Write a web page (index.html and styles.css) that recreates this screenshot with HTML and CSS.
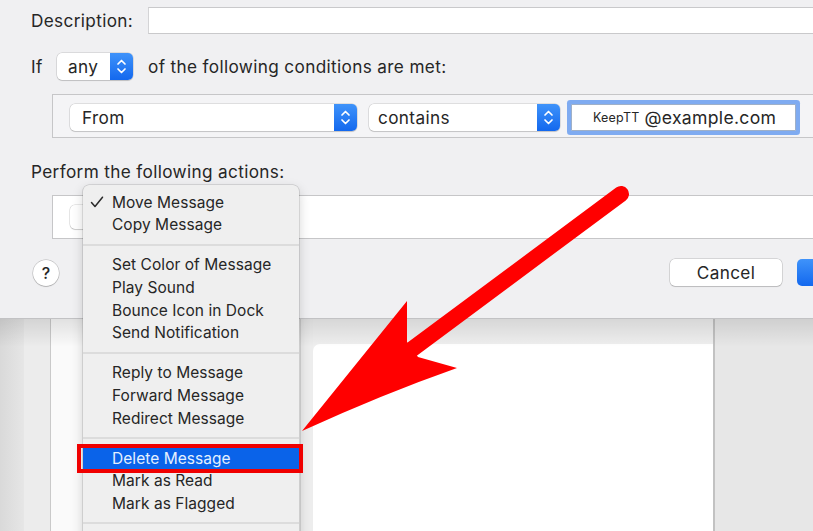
FILE: index.html
```html
<!DOCTYPE html>
<html>
<head>
<meta charset="utf-8">
<link rel="stylesheet" href="styles.css">
</head>
<body>
<div class="screen">
  <div class="dialog">
    <div class="row row-desc">
      <span class="label label-desc">Description:</span>
      <div class="field field-desc"></div>
    </div>
    <div class="row row-if">
      <span class="label label-if">If</span>
      <div class="popup popup-any">
        <span class="popup-text">any</span>
        <span class="stepper"><svg width="23" height="27" viewBox="0 0 23 27"><polyline points="8,11 11.5,7.5 15,11" fill="none" stroke="#fff" stroke-width="1.7" stroke-linecap="round" stroke-linejoin="round"/><polyline points="8,16 11.5,19.5 15,16" fill="none" stroke="#fff" stroke-width="1.7" stroke-linecap="round" stroke-linejoin="round"/></svg></span>
      </div>
      <span class="label label-cond">of the following conditions are met:</span>
    </div>
    <div class="box box-cond">
      <div class="popup popup-from">
        <span class="popup-text">From</span>
        <span class="stepper"><svg width="23" height="27" viewBox="0 0 23 27"><polyline points="8,11 11.5,7.5 15,11" fill="none" stroke="#fff" stroke-width="1.7" stroke-linecap="round" stroke-linejoin="round"/><polyline points="8,16 11.5,19.5 15,16" fill="none" stroke="#fff" stroke-width="1.7" stroke-linecap="round" stroke-linejoin="round"/></svg></span>
      </div>
      <div class="popup popup-contains">
        <span class="popup-text">contains</span>
        <span class="stepper"><svg width="23" height="27" viewBox="0 0 23 27"><polyline points="8,11 11.5,7.5 15,11" fill="none" stroke="#fff" stroke-width="1.7" stroke-linecap="round" stroke-linejoin="round"/><polyline points="8,16 11.5,19.5 15,16" fill="none" stroke="#fff" stroke-width="1.7" stroke-linecap="round" stroke-linejoin="round"/></svg></span>
      </div>
      <div class="field field-email">
        <span class="keep">KeepTT</span><span class="email">@example.com</span>
      </div>
    </div>
    <div class="row row-perform">
      <span class="label">Perform the following actions:</span>
    </div>
    <div class="box box-actions">
      <div class="popup popup-action"></div>
    </div>
    <div class="row row-buttons">
      <div class="help">?</div>
      <div class="spacer"></div>
      <div class="btn btn-cancel">Cancel</div>
      <div class="btn btn-ok"></div>
    </div>
  </div>
  <div class="backdrop">
    <div class="bd bd-a"></div>
    <div class="bd bd-b"></div>
    <div class="bd bd-c"></div>
    <div class="bd bd-d"></div>
    <div class="bd bd-e"><div class="card"></div></div>
    <div class="bd bd-f"></div>
  </div>

  <div class="menu">
    <div class="item checked"><svg class="check" width="14" height="12" viewBox="0 0 14 12"><polyline points="1.5,6.5 5,10.5 12.5,1.2" fill="none" stroke="#2a2a2a" stroke-width="1.5" stroke-linecap="round" stroke-linejoin="round"/></svg>Move Message</div>
    <div class="item">Copy Message</div>
    <div class="sep"></div>
    <div class="item">Set Color of Message</div>
    <div class="item">Play Sound</div>
    <div class="item">Bounce Icon in Dock</div>
    <div class="item">Send Notification</div>
    <div class="sep"></div>
    <div class="item">Reply to Message</div>
    <div class="item">Forward Message</div>
    <div class="item">Redirect Message</div>
    <div class="sep"></div>
    <div class="item selected">Delete Message</div>
    <div class="item">Mark as Read</div>
    <div class="item">Mark as Flagged</div>
    <div class="sep"></div>
  </div>

  <svg class="arrow" width="813" height="531" viewBox="0 0 813 531">
    <line x1="621" y1="194" x2="411" y2="350" stroke="#ff0000" stroke-width="16" stroke-linecap="round"/>
    <path d="M302,431 L407,301 L407,342 L418,357 L457,368 Q383,394 302,431 Z" fill="#ff0000"/>
  </svg>
</div>
</body>
</html>
```

FILE: styles.css
```css
* { box-sizing: border-box; }
html, body { margin: 0; padding: 0; }
body {
  font-family: Inter, "Liberation Sans", Arial, sans-serif;
  color: #262626;
  background: #efeff1;
}
.screen {
  position: relative;
  width: 813px;
  height: 531px;
  overflow: hidden;
  background: #efeff1;
}
.dialog {
  width: 890px;
  height: 319px;
  padding-left: 31px;
  padding-top: 7px;
  background: #f0f0f2;
  border-bottom: 1px solid #c2c2c4;
  display: flex;
  flex-direction: column;
}
.row {
  display: flex;
  align-items: center;
  height: 27px;
}
.label {
  font-size: 17.2px;
  letter-spacing: 0.35px;
  white-space: nowrap;
}
.label-desc { width: 117px; }
.field {
  background: #fff;
  height: 27px;
}
.field-desc {
  flex: 1;
  border-top: 1px solid #c9c9cb;
  border-bottom: 1px solid #c9c9cb;
  border-left: 1px solid #d4d4d6;
}
.row-if { margin-top: 19px; }
.label-if { width: 26px; }
.popup {
  position: relative;
  display: flex;
  align-items: center;
  height: 27px;
  background: #fff;
  border-radius: 5px;
  box-shadow: 0 0 0 0.5px rgba(0,0,0,0.18), 0 1px 1px rgba(0,0,0,0.12);
  overflow: hidden;
}
.popup-text {
  flex: 1;
  font-size: 17.2px;
  letter-spacing: 0.35px;
  padding-left: 12px;
}
.stepper {
  width: 23px;
  height: 27px;
  background: linear-gradient(#3f93fa, #1368ee);
  display: block;
}
.stepper svg { display: block; }
.popup-any { width: 76px; margin-right: 15px; }
.popup-any .popup-text { padding-left: 11px; }
.box {
  margin-left: 21px;
  height: 44px;
  border: 1px solid #c6c6c8;
  border-right: none;
  display: flex;
  align-items: flex-start;
}
.box-cond {
  margin-top: 14px;
  background: #f4f4f6;
  padding-left: 17px;
  padding-top: 9px;
}
.popup-from { width: 287px; margin-right: 12px; }
.popup-contains { width: 191px; margin-right: 11px; }
.popup-contains .popup-text { padding-left: 9px; }
.field-email {
  width: 225px;
  height: 27px;
  border: 1px solid #9fb0c8;
  box-shadow: 0 0 0 4px #7fabf1;
  border-radius: 1px;
  display: flex;
  align-items: center;
  padding-left: 21px;
}
.keep { font-size: 12.5px; margin-right: 5px; letter-spacing: 0.2px; }
.email { font-size: 17.6px; letter-spacing: 0.3px; }
.row-perform { margin-top: 21px; height: 24px; }
.box-actions {
  margin-top: 12px;
  background: #fff;
  padding-left: 17px;
  padding-top: 9px;
}
.popup-action { width: 200px; height: 24px; }
.row-buttons { margin-top: 20px; }
.help {
  width: 26px;
  height: 26px;
  margin-left: 2px;
  border-radius: 50%;
  background: #fff;
  box-shadow: 0 0 0 0.5px rgba(0,0,0,0.25), 0 1px 1px rgba(0,0,0,0.15);
  display: flex;
  align-items: center;
  justify-content: center;
  font-size: 16px;
  font-weight: 500;
}
.spacer { flex: 1; }
.btn {
  height: 27px;
  border-radius: 5px;
  display: flex;
  align-items: center;
  justify-content: center;
  font-size: 17.2px;
  letter-spacing: 0.35px;
}
.btn-cancel {
  width: 112px;
  background: #fff;
  box-shadow: 0 0 0 0.5px rgba(0,0,0,0.22), 0 1px 1px rgba(0,0,0,0.12);
  margin-right: 15px;
}
.btn-ok {
  width: 93px;
  background: linear-gradient(#3f93fa, #1368ee);
}

/* background window */
.backdrop {
  position: relative;
  display: flex;
  height: 212px;
}
.backdrop::after {
  content: "";
  position: absolute;
  left: 0; right: 0; top: 0;
  height: 28px;
  background: linear-gradient(rgba(0,0,0,0.10), rgba(0,0,0,0));
}
.bd { height: 100%; }
.bd-a { width: 24px; background: linear-gradient(90deg, #d9d9d9, #e6e6e6); }
.bd-b { width: 27px; background: #ececec; border-right: 1px solid #c9c9c9; }
.bd-c { width: 249px; background: #fafafa; }
.bd-d { width: 13px; background: #ededed; border-left: 1px solid #d6d6d6; }
.bd-e { width: 402px; background: #efefef; padding-top: 25px; border-right: 2px solid #c2c2c2; }
.card { height: 100%; background: #fff; border-top-left-radius: 7px; }
.bd-f { flex: 1; background: #e7e7e7; }

/* popup menu */
.menu {
  position: absolute;
  left: 83px;
  top: 185px;
  width: 216px;
  height: 370px;
  padding-top: 5.6px;
  background: #efefef;
  border-radius: 6px;
  box-shadow: 0 0 0 0.5px rgba(0,0,0,0.2), 0 4px 12px rgba(0,0,0,0.18);
}
.item {
  position: relative;
  height: 22.7px;
  line-height: 23.5px;
  padding-left: 29px;
  font-size: 15.5px;
  letter-spacing: 0.05px;
  color: #262626;
  white-space: nowrap;
}
.check {
  position: absolute;
  left: 7px;
  top: 5px;
}
.sep {
  height: 17.3px;
  display: flex;
  align-items: center;
}
.sep::before {
  content: "";
  display: block;
  width: 100%;
  height: 2px;
  background: #dcdcdc;
}
.item.selected {
  background: #0a63e9;
  color: #e4f0ff;
}
.item.selected::after {
  content: "";
  position: absolute;
  left: -6px;
  right: -4px;
  top: -2.8px;
  bottom: -3.5px;
  border: 4px solid #f00000;
}
.arrow {
  position: absolute;
  left: 0;
  top: 0;
  pointer-events: none;
}
```
